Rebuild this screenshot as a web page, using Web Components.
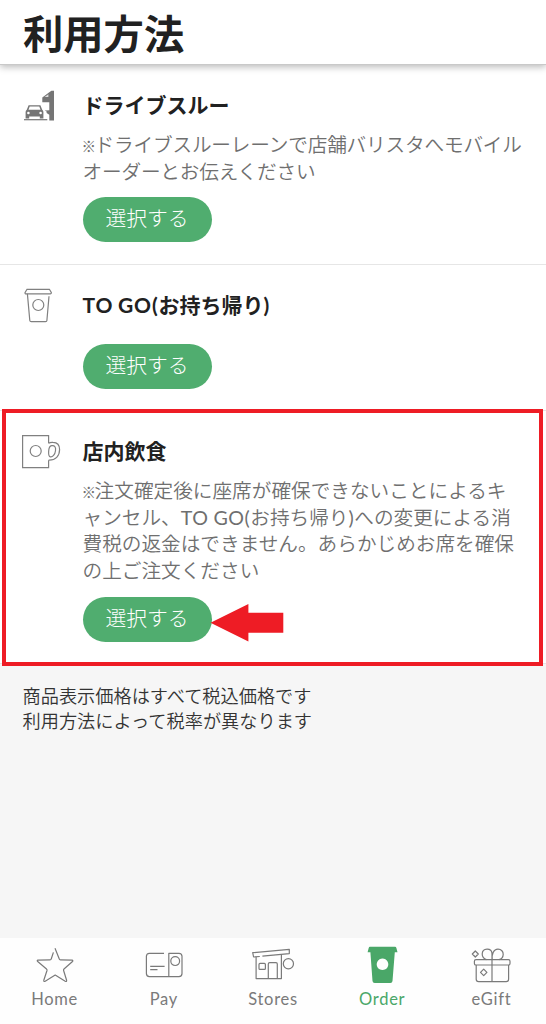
<!DOCTYPE html>
<html lang="ja">
<head>
<meta charset="utf-8">
<meta name="viewport" content="width=device-width, initial-scale=1">
<title>利用方法</title>
<style>
  body {
    margin: 0;
    background: #f6f6f6;
    color: #212121;
    font-family: Lato, "Noto Sans CJK JP", sans-serif;
  }

  small {
    font-size: 14.5px;
    font-weight: 500;
    line-height: 1;
    letter-spacing: -1.4px;
    margin-left: -1px;
  }

  .latin {
    font-weight: 400;
    letter-spacing: .5px;
    word-spacing: -.5px;
  }

  .latin.strong {
    font-weight: 700;
    letter-spacing: .8px;
    word-spacing: -1px;
  }
</style>
</head>
<body>
<order-app>
  <page-header slot="header">利用方法</page-header>

  <order-option icon="drive">
    <span slot="title">ドライブスルー</span>
    <span slot="note" style="letter-spacing: -.18px"><small>※</small>ドライブスルーレーンで店舗バリスタへモバイル<br>オーダーとお伝えください</span>
    <pill-button>選択する</pill-button>
  </order-option>

  <order-option icon="cup">
    <span slot="title"><span class="latin strong">TO GO(</span>お持ち帰り)</span>
    <pill-button>選択する</pill-button>
  </order-option>

  <order-option icon="mug" marked>
    <span slot="title">店内飲食</span>
    <span slot="note"><small>※</small>注文確定後に座席が確保できないことによるキ<br>ャンセル、<span class="latin">TO GO(</span>お持ち帰り<span class="latin">)</span>への変更による消<br>費税の返金はできません。あらかじめお席を確保<br>の上ご注文ください</span>
    <pill-button pointed>選択する</pill-button>
  </order-option>

  <price-note slot="note">商品表示価格はすべて税込価格です<br>利用方法によって税率が異なります</price-note>

  <tab-bar slot="tabs">
    <tab-item icon="star">Home</tab-item>
    <tab-item icon="card">Pay</tab-item>
    <tab-item icon="store">Stores</tab-item>
    <tab-item icon="order" active>Order</tab-item>
    <tab-item icon="gift">eGift</tab-item>
  </tab-bar>
</order-app>

<script>
const OPTION_ICONS = {
  drive: /* html */`
    <g fill="#757575" stroke="none">
      <path d="M27.3 5.2 L29.4 3.7 H32 V33.4 H27.3 V27.8 L24.6 26 V24.6 L22.6 23.6 L27.3 23.2 V15.2 H20.3 V10.4 Z"/>
      <path d="M2 32.1 H25.3 V33.3 H2 Z"/>
      <path fill-rule="evenodd" d="M6.6 18.2 H18.4 L20.2 22.8 Q21.4 23.6 21.4 25 V31.6 H17.8 V29.6 H7.2 V31.6 H3.6 V25 Q3.6 23.6 4.8 22.8 Z M7.7 19.5 L6.5 22.7 H18.5 L17.3 19.5 Z"/>
    </g>
    <path d="M22.6 10.1 L26.4 7.3 V10.1 Z" fill="#ddd" stroke="none"/>
    <circle cx="6.4" cy="26" r="1.3" fill="#fff" stroke="none"/>
    <circle cx="18.6" cy="26" r="1.3" fill="#fff" stroke="none"/>`,
  cup: /* html */`
    <path d="M5 2.3 H27.4 L29.4 5.6 Q29.4 6.9 28.3 6.9 H4 Q2.9 6.9 3 5.6 Z"/>
    <path d="M5.4 6.9 L7.8 33.5 Q8 34.7 9.2 34.7 H23.6 Q24.8 34.7 24.9 33.5 L27 9.3"/>
    <circle cx="16.3" cy="18" r="5.5"/>`,
  mug: /* html */`
    <path d="M26.6 10.3 V2.7 H.6 V34.7 H26.6 V27.2"/>
    <circle cx="13.7" cy="18" r="5.5"/>
    <path d="M26.6 10.3 Q28 9.2 31 9.4 C35.5 9.6 37.6 12.8 37.6 16.6 C37.6 23 33.6 27.5 26.6 27.2"/>
    <path d="M29.7 12.7 C32.8 12.2 34 14.4 33.5 17.7 C33 21.7 30.5 24.3 28.4 23.9 C26 23.5 25.7 13.4 29.7 12.7 Z"/>`
};

const TAB_ICONS = {
  star: /* html */`
    <path d="M20.4 7.4 L18.3 13.8 Q18 14.8 17 14.8 L5 15.2 Q3.6 15.5 4.7 16.5 L13.5 24 Q14.2 24.6 14 25.5 L10.8 35.3 Q10.7 37 12.2 36.3 L22.2 30 L32.2 36.3 Q33.8 37 33.6 35.3 L30.6 25.5 Q30.3 24.6 31 24 L39.5 16.5 Q40.4 15.5 39 15.2 L27.4 14.8 Q26.5 14.8 26.2 13.8 L22 3.3"/>`,
  card: /* html */`
    <path d="M22 8.3 H7.4 Q4.4 8.3 4.4 11.3 V28.6 Q4.4 31.6 7.4 31.6 H37 Q40 31.6 40 28.6 V11.3 Q40 8.3 37 8.3 H26.8 V31.6"/>
    <circle cx="33.2" cy="16.1" r="4.4"/>
    <path d="M8.2 21.4 H22.6 M8.2 24.7 H15.5"/>`,
  store: /* html */`
    <path d="M8.8 11.5 L2.6 12 L1.7 7.7 L38.3 4.4 V8.6 L11.4 11.2"/>
    <path d="M5.1 12 V33.6 H30.4 V9.4"/>
    <rect x="8" y="18.4" width="6.4" height="6" rx="1"/>
    <path d="M17.3 33.6 V19 Q17.3 17.6 18.7 17.6 H25 Q26.3 17.6 26.3 19 V33.6"/>
    <circle cx="37.4" cy="18.7" r="5.1"/>`,
  order: /* html */`
    <path fill="currentColor" stroke="none" fill-rule="evenodd" d="M9.9 1.7 H35 Q36.1 1.7 36.4 3 L37.5 7.2 H34.8 L32.5 36 Q32.3 37.9 30.4 37.9 H14.7 Q12.7 37.9 12.5 36 L10.4 7.2 H7.6 L8.7 3 Q9 1.7 9.9 1.7 Z M22.5 13.5 a5.8 5.8 0 1 0 .01 0 Z"/>`,
  gift: /* html */`
    <rect x="5.4" y="14.6" width="35.6" height="5.4" rx="1.6"/>
    <path d="M7.2 20 V34.2 Q7.2 36.6 9.6 36.6 H37.2 Q39.6 36.6 39.6 34.2 V20 M23 14.6 V36.6"/>
    <path d="M23 14.6 V8.5 C22.6 2.7 13.4 2.6 13.2 9 C13.2 11.6 14.7 13.6 17.4 14.6 M23.2 14.6 C22.6 9.8 24.4 4.2 29 4.2 C32.4 4.2 34.3 6.6 34.2 9.4 C34.1 12 32.6 13.8 30 14.6"/>
    <path d="M6.3 6 L9.3 9 L6.3 12 L3.3 9 Z"/>
    <path d="M14.7 24.2 L17.9 27.4 L14.7 30.6 L11.5 27.4 Z"/>`
};

class OrderApp extends HTMLElement {
  constructor() {
    super();
    this.attachShadow({ mode: "open" });
  }

  static get styles() {
    return /* css */`
      :host {
        display: flex;
        flex-direction: column;
        height: 100vh;
        overflow: hidden;
      }

      main {
        flex: 1;
      }
    `;
  }

  connectedCallback() {
    this.shadowRoot.innerHTML = /* html */`
    <style>${OrderApp.styles}</style>
    <slot name="header"></slot>
    <main>
      <slot></slot>
      <slot name="note"></slot>
    </main>
    <slot name="tabs"></slot>`;
  }
}

class PageHeader extends HTMLElement {
  constructor() {
    super();
    this.attachShadow({ mode: "open" });
  }

  static get styles() {
    return /* css */`
      :host {
        display: block;
        position: relative;
        z-index: 1;
        box-sizing: border-box;
        height: 65px;
        padding-left: 23px;
        background: #fff;
        border-bottom: 1px solid #c9c9c9;
        box-shadow: 0 2px 7px rgba(0, 0, 0, .28);
      }

      h1 {
        margin: 0;
        font-size: 40.3px;
        line-height: 68px;
        font-weight: 700;
      }
    `;
  }

  connectedCallback() {
    this.shadowRoot.innerHTML = /* html */`
    <style>${PageHeader.styles}</style>
    <h1><slot></slot></h1>`;
  }
}

class OrderOption extends HTMLElement {
  constructor() {
    super();
    this.attachShadow({ mode: "open" });
  }

  static get styles() {
    return /* css */`
      :host {
        display: grid;
        grid-template-columns: 40px 1fr;
        column-gap: 20.5px;
        position: relative;
        box-sizing: border-box;
        padding: 27px 0 21.5px 22px;
        background: #fff;
        border-bottom: 1px solid #e6e6e6;
      }

      /* red frame over the row */
      :host([marked])::after {
        content: "";
        position: absolute;
        inset: -2px 3px -3px 2px;
        border: 4px solid #ee1c25;
      }

      svg {
        width: 40px;
        height: 36px;
        margin-top: -5px;
        fill: none;
        stroke: #808080;
        stroke-width: 1.2;
      }

      .body {
        display: flex;
        flex-direction: column;
      }

      h2 {
        margin: 0;
        font-size: 21px;
        line-height: 26px;
        font-weight: 700;
      }

      p {
        margin: 13.8px 0 12px;
        color: #6f6f6f;
        font-size: 19.65px;
        line-height: 26.7px;
        font-weight: 350;
        white-space: nowrap;
      }
    `;
  }

  connectedCallback() {
    this.shadowRoot.innerHTML = /* html */`
    <style>${OrderOption.styles}</style>
    <svg viewBox="0 0 40 36">${OPTION_ICONS[this.getAttribute("icon")]}</svg>
    <div class="body">
      <h2><slot name="title"></slot></h2>
      <p><slot name="note"></slot></p>
      <slot></slot>
    </div>`;
  }
}

class PillButton extends HTMLElement {
  constructor() {
    super();
    this.attachShadow({ mode: "open" });
  }

  static get styles() {
    return /* css */`
      :host {
        display: block;
        position: relative;
        width: 129px;
      }

      button {
        display: block;
        width: 100%;
        height: 45px;
        padding: 0 0 3px;
        border: 0;
        border-radius: 23px;
        background: #50ad6f;
        color: #fff;
        font: inherit;
        font-size: 20.8px;
        line-height: 42px;
        font-weight: 300;
        white-space: nowrap;
      }

      svg {
        display: none;
        position: absolute;
        left: 127px;
        top: 7px;
        width: 74px;
        height: 38px;
        fill: #ee1c25;
      }

      :host([pointed]) svg {
        display: block;
      }
    `;
  }

  connectedCallback() {
    this.shadowRoot.innerHTML = /* html */`
    <style>${PillButton.styles}</style>
    <button type="button"><slot></slot></button>
    <svg viewBox="0 0 74 38"><path d="M.5 18.8 L38.4 0 V8.7 H73.3 V28.7 H38.4 V37.4 Z"/></svg>`;
  }
}

class PriceNote extends HTMLElement {
  constructor() {
    super();
    this.attachShadow({ mode: "open" });
  }

  static get styles() {
    return /* css */`
      :host {
        display: block;
        padding: 19.4px 22.5px;
        color: #333;
        font-size: 18.2px;
        line-height: 25px;
        font-weight: 350;
      }
    `;
  }

  connectedCallback() {
    this.shadowRoot.innerHTML = /* html */`
    <style>${PriceNote.styles}</style>
    <slot></slot>`;
  }
}

class TabBar extends HTMLElement {
  constructor() {
    super();
    this.attachShadow({ mode: "open" });
  }

  static get styles() {
    return /* css */`
      :host {
        display: grid;
        grid-template-columns: repeat(5, 1fr);
        height: 86px;
        background: #fefefe;
      }
    `;
  }

  connectedCallback() {
    this.shadowRoot.innerHTML = /* html */`
    <style>${TabBar.styles}</style>
    <slot></slot>`;
  }
}

class TabItem extends HTMLElement {
  constructor() {
    super();
    this.attachShadow({ mode: "open" });
  }

  static get styles() {
    return /* css */`
      :host {
        display: flex;
        flex-direction: column;
        align-items: center;
        padding-top: 7px;
        color: #7a7a7a;
        font-size: 16.5px;
        line-height: 20px;
        letter-spacing: .7px;
      }

      :host([active]) {
        color: #4aa768;
      }

      svg {
        width: 44px;
        height: 40px;
        margin-bottom: 4px;
        fill: none;
        stroke: currentColor;
        stroke-width: 1.2;
        stroke-linejoin: round;
      }
    `;
  }

  connectedCallback() {
    this.shadowRoot.innerHTML = /* html */`
    <style>${TabItem.styles}</style>
    <svg viewBox="0 0 44 40">${TAB_ICONS[this.getAttribute("icon")]}</svg>
    <span><slot></slot></span>`;
  }
}

customElements.define("order-app", OrderApp);
customElements.define("page-header", PageHeader);
customElements.define("order-option", OrderOption);
customElements.define("pill-button", PillButton);
customElements.define("price-note", PriceNote);
customElements.define("tab-bar", TabBar);
customElements.define("tab-item", TabItem);
</script>
</body>
</html>
